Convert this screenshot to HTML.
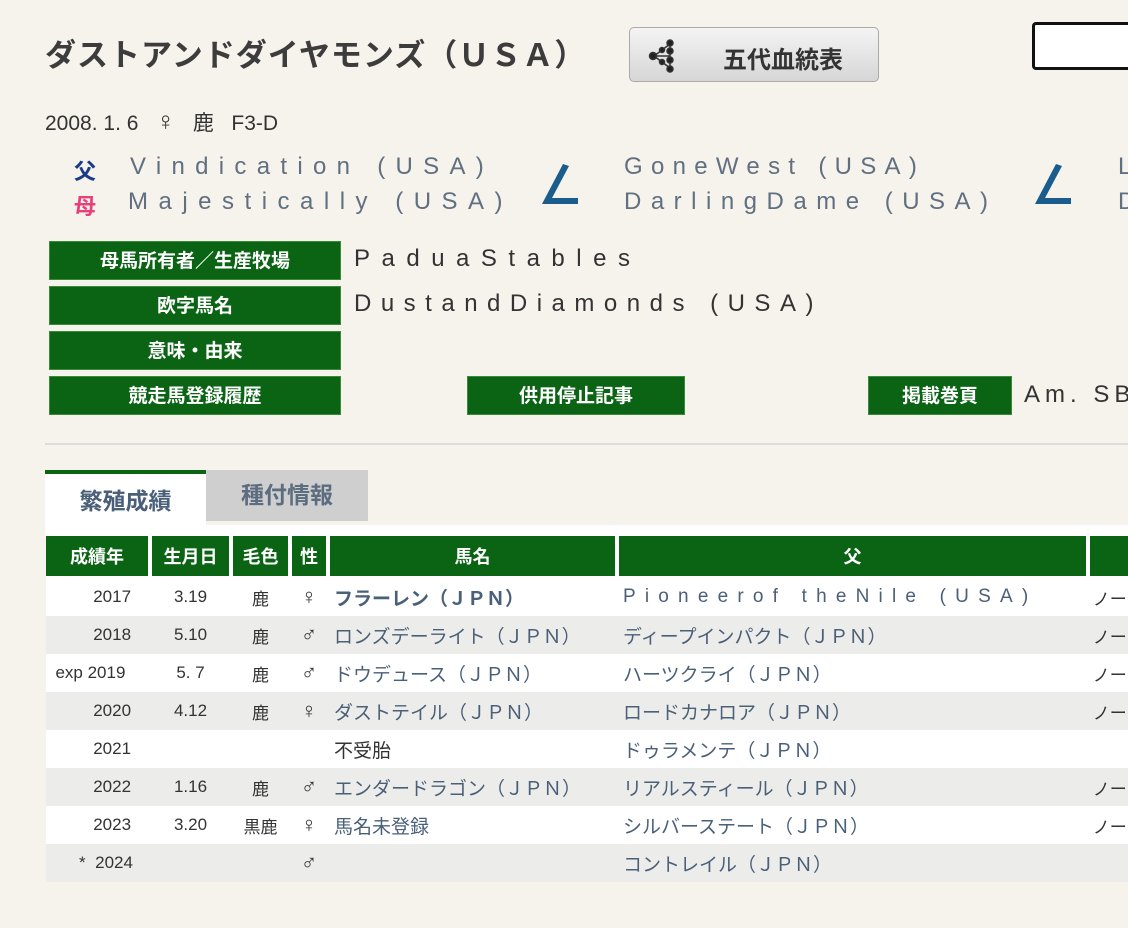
<!DOCTYPE html>
<html><head><meta charset="utf-8"><style>
body{margin:0;width:1128px;height:928px;overflow:hidden;background:#f6f2ec;font-family:"Liberation Sans","Noto Sans CJK JP",sans-serif;color:#333;position:relative}
.a{position:absolute;white-space:nowrap}
.t{left:45px;top:30px;font-size:31px;font-weight:bold;color:#3c3c3c;letter-spacing:1px}
.btn{left:629px;top:27px;width:250px;height:55px;border:1px solid #aaa;border-radius:5px;background:linear-gradient(#f4f4f4,#d6d6d6);box-sizing:border-box}
.btn span{position:absolute;left:93px;top:12px;font-size:24px;font-weight:bold;color:#333}
.inp{left:1032px;top:22px;width:110px;height:48px;border:3px solid #111;border-radius:4px;background:#fff;box-sizing:border-box}
.g{background:#0a6414;color:#fff;font-weight:bold;font-size:19px;text-align:center;line-height:39px;height:39px;border:1px solid #3a8a3a;box-sizing:border-box}
.lk{color:#607080;font-size:24px}
.v{font-size:24px;color:#333}
table{position:absolute;left:46px;top:536px;border-collapse:collapse;width:1100px;font-size:17px;table-layout:fixed}
th{background:#0a6414;color:#fff;font-weight:bold;height:40px;font-size:18px;border-left:4px solid #fff;border-bottom:2px solid #fff;padding:0}
th:first-child{border-left:none}
td{height:38px;padding:0;vertical-align:middle;white-space:nowrap;overflow:hidden}
tr.o td{background:#fff}tr.e td{background:#ececea}
.c{text-align:center}.n{color:#4a5f78;padding-left:6px}
.s{font-size:22px;text-align:center}
</style></head><body>
<div class="a t">ダストアンドダイヤモンズ（ＵＳＡ）</div>
<div class="a btn"><svg style="position:absolute;left:18px;top:10px" width="40" height="36" viewBox="0 0 40 36"><g stroke="#333" stroke-width="1.5" fill="#222"><line x1="6" y1="18" x2="22" y2="6"/><line x1="6" y1="18" x2="22" y2="18"/><line x1="6" y1="18" x2="22" y2="30"/><line x1="22" y1="6" x2="22" y2="30"/><circle cx="5" cy="18" r="3.5"/><circle cx="22" cy="5" r="3"/><circle cx="22" cy="13" r="3"/><circle cx="22" cy="22" r="3"/><circle cx="22" cy="31" r="3"/><circle cx="14" cy="12" r="2.5"/><circle cx="14" cy="24" r="2.5"/></g></svg><span>五代血統表</span></div>
<div class="a inp"></div>
<div class="a" style="left:45px;top:106px;font-size:21px;color:#333">2008. 1. 6&nbsp;&nbsp;&nbsp;<span style="font-size:26px">♀</span>&nbsp;&nbsp;&nbsp;鹿&nbsp;&nbsp;&nbsp;F3-D</div>
<div class="a" style="left:74px;top:154px;font-size:22px;font-weight:bold;color:#1a3a8a">父</div>
<div class="a" style="left:74px;top:189px;font-size:22px;font-weight:bold;color:#e8407a">母</div>
<div class="a lk" style="left:130px;top:153px;letter-spacing:10.3px">Vindication (USA)</div>
<div class="a lk" style="left:128px;top:188px;letter-spacing:10.5px">Majestically (USA)</div>
<svg class="a" style="left:538px;top:163px" width="42" height="44"><path d="M25 1 L4 41 L40 41 L40 35 L14 35 L31 3Z" fill="#1a5d8c"/></svg>
<div class="a lk" style="left:624px;top:153px;letter-spacing:8.3px">GoneWest (USA)</div>
<div class="a lk" style="left:624px;top:188px;letter-spacing:9.5px">DarlingDame (USA)</div>
<svg class="a" style="left:1031px;top:163px" width="42" height="44"><path d="M25 1 L4 41 L40 41 L40 35 L14 35 L31 3Z" fill="#1a5d8c"/></svg>
<div class="a lk" style="left:1118px;top:153px">L</div><div class="a lk" style="left:1118px;top:188px">D</div>
<div class="a g" style="left:49px;top:241px;width:292px">母馬所有者／生産牧場</div>
<div class="a g" style="left:49px;top:286px;width:292px">欧字馬名</div>
<div class="a g" style="left:49px;top:331px;width:292px">意味・由来</div>
<div class="a g" style="left:49px;top:376px;width:292px">競走馬登録履歴</div>
<div class="a g" style="left:467px;top:376px;width:218px">供用停止記事</div>
<div class="a g" style="left:868px;top:376px;width:144px">掲載巻頁</div>
<div class="a v" style="left:354px;top:245px;letter-spacing:11.5px">PaduaStables</div>
<div class="a v" style="left:354px;top:290px;letter-spacing:9.5px">DustandDiamonds (USA)</div>
<div class="a v" style="left:1024px;top:381px;letter-spacing:5px">Am. SB</div>
<div class="a" style="left:45px;top:443px;width:1090px;height:2px;background:#dcdcdc"></div>
<div class="a" style="left:45px;top:470px;width:161px;height:56px;background:#fff;border-top:4px solid #0a6414;box-sizing:border-box;text-align:center;line-height:54px;font-size:23px;font-weight:bold;color:#4a5f78">繁殖成績</div>
<div class="a" style="left:206px;top:470px;width:162px;height:51px;background:#cfcfcf;text-align:center;line-height:50px;font-size:23px;font-weight:bold;color:#5c6d80">種付情報</div>
<div class="a" style="left:45px;top:525px;width:1090px;height:12px;background:#fff"></div>
<table>
<colgroup><col style="width:104px"><col style="width:81px"><col style="width:59px"><col style="width:38px"><col style="width:289px"><col style="width:471px"><col></colgroup>
<tr><th>成績年</th><th>生月日</th><th>毛色</th><th>性</th><th>馬名</th><th>父</th><th></th></tr>
<tr class="o"><td>&nbsp;&nbsp;&nbsp;&nbsp;&nbsp;&nbsp;&nbsp;&nbsp;&nbsp;&nbsp;2017</td><td class="c">3.19</td><td class="c">鹿</td><td class="s">♀</td><td class="n" style="font-weight:bold;font-size:19px">フラーレン（ＪＰＮ）</td><td class="n" style="font-size:19px;letter-spacing:9.2px">Pioneerof theNile (USA)</td><td>&nbsp;ノー</td></tr>
<tr class="e"><td>&nbsp;&nbsp;&nbsp;&nbsp;&nbsp;&nbsp;&nbsp;&nbsp;&nbsp;&nbsp;2018</td><td class="c">5.10</td><td class="c">鹿</td><td class="s">♂</td><td class="n" style="font-size:19px">ロンズデーライト（ＪＰＮ）</td><td class="n" style="font-size:19px">ディープインパクト（ＪＰＮ）</td><td>&nbsp;ノー</td></tr>
<tr class="o"><td>&nbsp;&nbsp;exp 2019</td><td class="c">5. 7</td><td class="c">鹿</td><td class="s">♂</td><td class="n" style="font-size:19px">ドウデュース（ＪＰＮ）</td><td class="n" style="font-size:19px">ハーツクライ（ＪＰＮ）</td><td>&nbsp;ノー</td></tr>
<tr class="e"><td>&nbsp;&nbsp;&nbsp;&nbsp;&nbsp;&nbsp;&nbsp;&nbsp;&nbsp;&nbsp;2020</td><td class="c">4.12</td><td class="c">鹿</td><td class="s">♀</td><td class="n" style="font-size:19px">ダストテイル（ＪＰＮ）</td><td class="n" style="font-size:19px">ロードカナロア（ＪＰＮ）</td><td>&nbsp;ノー</td></tr>
<tr class="o"><td>&nbsp;&nbsp;&nbsp;&nbsp;&nbsp;&nbsp;&nbsp;&nbsp;&nbsp;&nbsp;2021</td><td></td><td></td><td></td><td style="font-size:19px;padding-left:6px">不受胎</td><td class="n" style="font-size:19px">ドゥラメンテ（ＪＰＮ）</td><td></td></tr>
<tr class="e"><td>&nbsp;&nbsp;&nbsp;&nbsp;&nbsp;&nbsp;&nbsp;&nbsp;&nbsp;&nbsp;2022</td><td class="c">1.16</td><td class="c">鹿</td><td class="s">♂</td><td class="n" style="font-size:19px">エンダードラゴン（ＪＰＮ）</td><td class="n" style="font-size:19px">リアルスティール（ＪＰＮ）</td><td>&nbsp;ノー</td></tr>
<tr class="o"><td>&nbsp;&nbsp;&nbsp;&nbsp;&nbsp;&nbsp;&nbsp;&nbsp;&nbsp;&nbsp;2023</td><td class="c">3.20</td><td class="c">黒鹿</td><td class="s">♀</td><td class="n" style="font-size:19px">馬名未登録</td><td class="n" style="font-size:19px">シルバーステート（ＪＰＮ）</td><td>&nbsp;ノー</td></tr>
<tr class="e"><td>&nbsp;&nbsp;&nbsp;&nbsp;&nbsp;&nbsp;&nbsp;*&nbsp;&nbsp;2024</td><td></td><td></td><td class="s">♂</td><td></td><td class="n" style="font-size:19px">コントレイル（ＪＰＮ）</td><td></td></tr>
</table>
</body></html>
